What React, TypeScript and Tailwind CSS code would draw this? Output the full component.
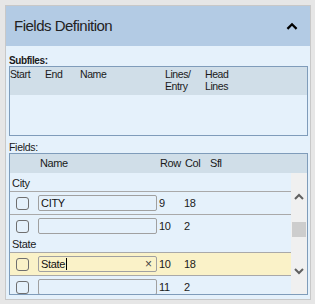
import React from "react";

type Row =
  | { kind: "label"; text: string }
  | { kind: "field"; name: string; row: string; col: string; active?: boolean };

const rows: Row[] = [
  { kind: "field", name: "", row: "", col: "" },
  { kind: "label", text: "City" },
  { kind: "field", name: "CITY", row: "9", col: "18" },
  { kind: "field", name: "", row: "10", col: "2" },
  { kind: "label", text: "State" },
  { kind: "field", name: "State", row: "10", col: "18", active: true },
  { kind: "field", name: "", row: "11", col: "2" },
];

const Chevron = ({ up, className }: { up?: boolean; className?: string }) => (
  <svg viewBox="0 0 10 7" className={className} fill="none">
    <path
      d={up ? "M1 6L5 2L9 6" : "M1 1L5 5L9 1"}
      stroke="currentColor"
      strokeWidth="2"
    />
  </svg>
);

const FieldRow = ({ row }: { row: Extract<Row, { kind: "field" }> }) => (
  <div
    className={`flex h-[23px] items-center border-t border-[#a9a9a9] ${
      row.active ? "bg-[#faf2c8]" : ""
    }`}
  >
    <div className="ml-[6px] size-[13px] rounded-[3px] border border-[#6f6f6f]" />
    <div className="ml-[9px] flex h-[16px] w-[119px] items-center rounded-[2px] border border-[#a0a0a0] pl-[2px] pr-[4px]">
      <span className="text-[11px] tracking-[-0.3px] text-[#111]">{row.name}</span>
      {row.active && (
        <>
          <span className="ml-[1px] h-[12px] w-px bg-black" />
          <span className="ml-auto text-[12px] leading-none text-[#444]">×</span>
        </>
      )}
    </div>
    <div className="ml-[2px] w-[25px] text-[11px] tracking-[-0.3px]">{row.row}</div>
    <div className="text-[11px] tracking-[-0.3px]">{row.col}</div>
  </div>
);

export default function App() {
  return (
    <div
      className="h-[304px] w-[315px] bg-[#e6e6e6] pb-[4px] pl-[5px] pr-[4px] pt-[5px] text-[#1a1a1a]"
      style={{ fontFamily: '"Liberation Sans", Arial, sans-serif' }}
    >
      <div className="flex h-full flex-col border border-[#c8c8c8] bg-[#e5f1fb]">
        <div className="flex h-[40px] items-center justify-between bg-[#b3cbe4] pl-[8px] pr-[12px]">
          <span className="text-[15px] tracking-[-0.5px] text-[#222]">
            Fields Definition
          </span>
          <Chevron up className="h-[8px] w-[12px] text-black" />
        </div>

        <div className="flex flex-col pl-[3px] pr-[2px] pt-[9px]">
          <div className="text-[10px] font-bold leading-[11px] tracking-[-0.4px]">
            Subfiles:
          </div>
          <div className="h-[70px] border border-[#7f9cba]">
            <div className="flex h-[28px] bg-[#d0dee8] pt-[1px] text-[10.5px] leading-[12px] tracking-[-0.4px]">
              <div className="w-[35px]">Start</div>
              <div className="w-[35px]">End</div>
              <div className="w-[85px]">Name</div>
              <div className="w-[40px]">
                Lines/
                <br />
                Entry
              </div>
              <div>
                Head
                <br />
                Lines
              </div>
            </div>
          </div>

          <div className="mt-[6px] text-[10.5px] leading-[11px] tracking-[-0.3px]">
            Fields:
          </div>
          <div className="flex h-[142px] flex-col border border-[#7f9cba]">
            <div className="flex h-[19px] shrink-0 items-center bg-[#d0dee8] text-[11px] tracking-[-0.4px]">
              <div className="ml-[30px] w-[120px]">Name</div>
              <div className="w-[25px]">Row</div>
              <div className="w-[25px]">Col</div>
              <div>Sfl</div>
            </div>
            <div className="flex min-h-0 flex-1">
              <div className="min-w-0 flex-1 overflow-hidden">
                <div className="-mt-[20px]">
                  {rows.map((r, i) =>
                    r.kind === "label" ? (
                      <div
                        key={i}
                        className="flex h-[15px] items-center pl-[2px] text-[11px] tracking-[-0.3px]"
                      >
                        {r.text}
                      </div>
                    ) : (
                      <FieldRow key={i} row={r} />
                    )
                  )}
                </div>
              </div>
              <div className="flex w-[16px] flex-col items-center bg-[#f0f0f0] text-[#606060]">
                <Chevron up className="mt-[20px] h-[7px] w-[10px]" />
                <div className="mt-[22px] h-[15px] w-[14px] bg-[#cdcdcd]" />
                <Chevron className="mt-[31px] h-[7px] w-[10px]" />
              </div>
            </div>
          </div>
        </div>
      </div>
    </div>
  );
}
